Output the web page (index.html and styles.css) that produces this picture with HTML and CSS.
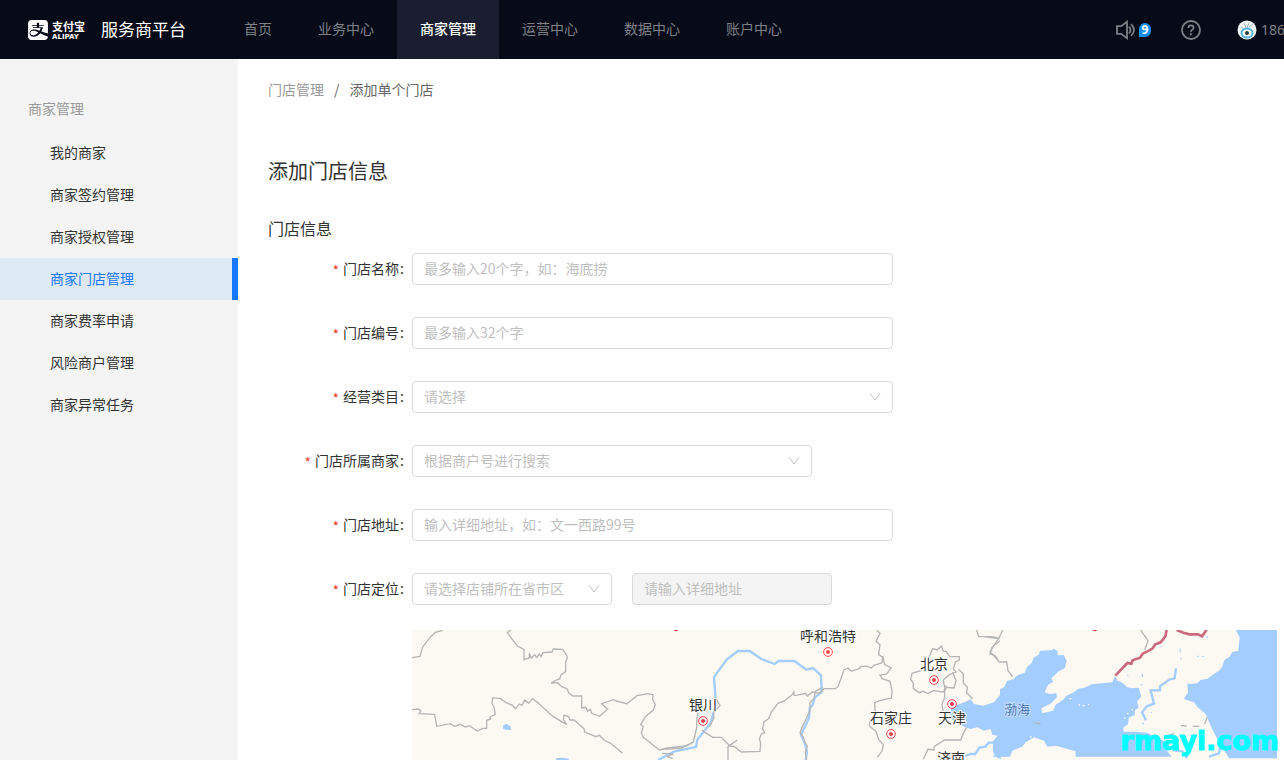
FILE: index.html
```html
<!DOCTYPE html>
<html lang="zh-CN">
  <head>
    <meta charset="UTF-8" />
    <meta name="viewport" content="width=device-width, initial-scale=1.0" />
    <title>添加单个门店</title>
    <link rel="stylesheet" href="styles.css">
  </head>
  <body>
    <header class="header">
      <a href="#" class="logo">
        <svg class="logo-icon" viewBox="0 0 24 24">
          <path fill="#fff" d="M19.695 15.07c3.426 1.158 4.203 1.22 4.203 1.22V3.846c0-2.124-1.705-3.845-3.81-3.845H3.914C1.808.001.102 1.722.102 3.846v16.31c0 2.123 1.706 3.845 3.813 3.845h16.173c2.105 0 3.81-1.722 3.81-3.845v-.157s-6.19-2.602-9.315-4.119c-2.096 2.602-4.8 4.181-7.607 4.181-4.75 0-6.361-4.19-4.112-6.949.49-.602 1.324-1.175 2.617-1.497 2.025-.502 5.247.313 8.266 1.317a16.796 16.796 0 0 0 1.341-3.302H5.781v-.952h4.799V6.975H4.77v-.953h5.81V3.591s0-.409.411-.409h2.347v2.84h5.744v.951h-5.744v1.704h4.69a19.453 19.453 0 0 1-1.986 5.06c1.424.52 2.702 1.011 3.654 1.333m-13.81-2.032c-.596.06-1.71.325-2.321.869-1.83 1.608-.735 4.55 2.968 4.55 2.151 0 4.301-1.388 5.99-3.61-2.403-1.182-4.438-2.028-6.637-1.809" />
        </svg>
        <span class="logo-text">
          <span class="logo-cn">支付宝</span>
          <span class="logo-en">ALIPAY</span>
        </span>
        <span class="logo-title">服务商平台</span>
      </a>
      <nav class="nav">
        <a href="#">首页</a>
        <a href="#">业务中心</a>
        <a href="#" class="active">商家管理</a>
        <a href="#">运营中心</a>
        <a href="#">数据中心</a>
        <a href="#">账户中心</a>
      </nav>
      <div class="tools">
        <button class="notice" aria-label="消息">
          <svg width="20" height="20" viewBox="0 0 20 20" fill="none" stroke="#7d8087" stroke-width="1.8">
            <path d="M1 6.2h4.2L11 1.800v16.400l-5.800-4.400H1z" />
            <path d="M13 6.600q3 3.400 0 6.800M15 4.200q6 5.800 0 11.600" />
          </svg>
          <span class="badge">9</span>
        </button>
        <button class="help" aria-label="帮助">
          <svg width="20" height="20" viewBox="0 0 20 20" fill="none" stroke="#7d8087" stroke-width="1.800">
            <circle cx="10" cy="10" r="9" />
            <path d="M7.400 8q0-2.600 2.600-2.600T12.600 7.800q0 1.200-1.400 2T10 12M10 13.300v1.900" />
          </svg>
        </button>
        <a href="#" class="user">
          <svg width="20" height="20" viewBox="0 0 20 20">
            <circle cx="10" cy="10" r="9.500" fill="#f3f6f8" />
            <path d="M7 3l2 5M12 3l-2 5M12 7l4-3M4 7l3 2" stroke="#a9b2b8" fill="none" />
            <ellipse cx="10" cy="13" rx="5.500" ry="4.500" fill="#fff" stroke="#4fb4e0" stroke-width="2" />
            <circle cx="10" cy="13" r="2" fill="#333" />
          </svg>
          <span>186******32</span>
        </a>
      </div>
    </header>

    <div class="page">
      <aside class="sidebar">
        <div class="sidebar-title">商家管理</div>
        <a href="#">我的商家</a>
        <a href="#">商家签约管理</a>
        <a href="#">商家授权管理</a>
        <a href="#" class="active">商家门店管理</a>
        <a href="#">商家费率申请</a>
        <a href="#">风险商户管理</a>
        <a href="#">商家异常任务</a>
      </aside>

      <main class="content">
        <div class="breadcrumb">
          <a href="#">门店管理</a>
          <span>/</span>
          <span class="current">添加单个门店</span>
        </div>
        <h1>添加门店信息</h1>
        <h2>门店信息</h2>

        <form class="form">
          <div class="row">
            <label for="shopName">门店名称</label>
            <input class="field" type="text" id="shopName" placeholder="最多输入20个字，如：海底捞" />
          </div>
          <div class="row">
            <label for="shopNo">门店编号</label>
            <input class="field" type="text" id="shopNo" placeholder="最多输入32个字" />
          </div>
          <div class="row">
            <label for="category">经营类目</label>
            <div class="select">
              <select class="field" id="category">
                <option>请选择</option>
              </select>
              <svg width="12" height="12" viewBox="0 0 12 12"><path d="M1 2.500l5 6.500 5-6.500" /></svg>
            </div>
          </div>
          <div class="row">
            <label for="merchant">门店所属商家</label>
            <div class="select medium">
              <select class="field" id="merchant">
                <option>根据商户号进行搜索</option>
              </select>
              <svg width="12" height="12" viewBox="0 0 12 12"><path d="M1 2.500l5 6.500 5-6.500" /></svg>
            </div>
          </div>
          <div class="row">
            <label for="address">门店地址</label>
            <input class="field" type="text" id="address" placeholder="输入详细地址，如：文一西路99号" />
          </div>
          <div class="row">
            <label for="region">门店定位</label>
            <div class="select small">
              <select class="field" id="region">
                <option>请选择店铺所在省市区</option>
              </select>
              <svg width="12" height="12" viewBox="0 0 12 12"><path d="M1 2.500l5 6.500 5-6.500" /></svg>
            </div>
            <input class="field detail" type="text" aria-label="详细地址" placeholder="请输入详细地址" disabled />
          </div>
        </form>

        <div class="map">
          <svg viewBox="0 18 2595 390" preserveAspectRatio="xMinYMin slice">
            <!-- sea -->
            <g class="sea" transform="translate(1716 0)">
              <path d="M-52 232l12-7 10 15 28 5 32-10 18-22 0-18 12-5 10-20 18-4 12-12 22-8 8-18 14-12 4-14 16-10 4-12 34-1 7-5 12 8 0 12 18-1 9 18-6 22-20 10-20 20 5 10-15 10-10 22 15 5 20-2 2 12-17 18-30 15 3 15 32-8 8-18 22-14 12-14 18-8 16-12 18-3 22-10 62-6 8-20 7 15 12 4 18 16 14 3 20-2 8 27-13 14 5 20-11 6-1 15-18 8-2 20-15 10 2 12 30 0 40 3 25 12 20 10 20 15-9 12 18 23H275l0-16-35-10-25-7-25 3-10-18-30-10-25 15-10 13-30 12-7 18H25l15-13-10-20-5-10 15-20-15-3 -5-17-20 5-20-10-20 5-20-7-30-13-10-15 2-30z" />
              <path d="M755 0v18l12 22-4 40-18 4-8 14-16 10-6 20-10 12-15 10-20 14-20 4-10 10-20 2-10-2 2 27-12 20 30 10 10 14 25 21 15 35 20 40 15 25 20 33h144V0z" />
              <path d="M28 358q14-10 22 0l0 48q-30-10-22-48" />
            </g>
            <path class="lake" d="M273 305l10-6 12 8 3 10-12 1-12-3zM432 403l20-2 18 3v8h-38z" />
            <g class="lake" transform="translate(1716 0)">
              <path d="M430 152h3v4h-3zM473 150h4v8h-4zM470 180h5v4h-5zM587 73h3v12h-3zM588 102h4v4h-4zM640 95h4v4h-4zM655 96h5v3h-5zM668 37h4v4h-4zM530 66h3v3h-3zM500 263h4v3h-4zM475 297h5v4h-5z" />
            </g>

            <!-- islands -->
            <g class="island" transform="translate(1716 0)">
              <path d="M256 222h6v4h-6zM284 241h4v4h-4zM296 243h6v4h-6zM312 240h3v3h-3zM428 267h6v4h-6zM420 280h4v4h-4zM442 255h5v4h-5zM138 337h5v4h-5zM835 374h7v7h-7z" />
            </g>

            <!-- rivers -->
            <g class="river">
              <path d="M738 408l50-26 64-13 4-22 40-50 16-58-6-80 38-52 34-26h35l35 24 40 15 12-9h47l36 26 20-5 24 22 2 50-20 16-8 24-8 8-2 30-24 50 10 22 8 28-4 28" />
              <path d="M1660 396l16-6h14l12-19 18-3 10-12h30" />
            </g>
            <g class="river" transform="translate(1716 0)">
              <path d="M576 133l-4 30-16 4-28 20v12h-28l10 40-22 8-14 18 12 24" />
              <path d="M565 378l30 4 15 20M675 398l30-10 4-22" />
            </g>

            <!-- province borders -->
            <g class="border">
              <path d="M0 101l24-4 8-28 20-26 18-18 22-6" />
              <path d="M296 18l-10 8 30 40 20 10v31l16-5 0-14 6 14 10-10 6 8 8-10 6 8 4-12 28-2 4-9 28 1 12 18 2 8-5 10v31l-14 10-4 12-12 4-14 8 20-1 12 12 16 6 6 14 12 8h26v36l12-2 6 12 8-6 4 12 24 9 24-22-18-16 36-12 8 4 32 8 30-24 34-6 14 3-1 14 8 16-6 16-24 20-14 24 8 6-6 18 6 14 48 38 24-6 56-6 22-12 10-42v-20l4-26" />
              <path d="M0 257l20-2 6 6-4 8 46 2 6 36 40-8 14 8 16-6 16 8 12-4 24 16 16-8h12v-24l12-4-2-6 16-8-4-22-6-10 2-18 24 3 16 12 20 8 8 10 12-14 8 4 8-16 12 10 12-14 16 12 30 28 16 14 40 24-10-16 2-12 14 4 4 10 12 0 14 12 16 14 2 10 34 14 10-4 14 14 20 10 36 30" />
              <path d="M758 376l50-4 36-18M750 388l34 2-18 8 16 6" />
            </g>
            <g class="border" transform="translate(864 0)">
              <path d="M530 18l10 10-12 24 12 10-4 30 12 8-2 16-24 8-8 8-16-6-16 2-4 6-24 8-10-10-12 6-18 50-8 6h-34l-14 14-20-4-16 12-6-8-26 6-8 0 0-10-8 10-20 16-20 8-20 26-8 20-14 10-4 20 6 12-10 4-6 16 4 12-2 24-56 2-20-16-14-2-26-26-26 0-22-14-10-8" />
              <path d="M28 308l14-26-2-16 20-22-12-20M112 348l-28 20v40" />
              <path d="M368 190l-22 12-4 22-12 12 0 24-24 50-6 16 10 14 4 14 8 12-6 20 4 24" />
              <path d="M548 96l6 26 20 10-14 18-20 4 6 10 24 8 6 28-2 22-34 8-16 6 2 36-16 16-2 18 20 16 8 24 14 16-4 20-14 18" />
              <path d="M688 98l10-24 14 4 12-12 6 16 8 0 12 16h28v10l-12 6-6 20 8 10-20 8-18 16 2 14 8 8-10 14-30-4-16 8-16-6-10 4-18-12v-16l-8-12 4-18 26-8 8-12 12-6z" />
              <path d="M734 186l0 34-8 20 4 30M758 144l10 26-6 22-24-2M776 136l14 14 0 28 12 12-2 16 18 18M800 310l-10 18-8 20h-48l-32 20 0 10-18-2-14 30" />
              <path d="M830 18l6 20h40l18 4M900 50l-24 20-6 20 14 4 10 12" />
            </g>
            <g class="border" transform="translate(1716 0)">
              <path d="M0 38l44 6 12-26M44 44l-18 26-8 14 20 20 8 10h22l4 26 14 18M470 18l22 32-10 28" />
              <path d="M590 305l18 1M626 307h20M662 300l8-20M548 340l22-12M154 297l16 2" />
            </g>

            <!-- national border -->
            <g class="nation" transform="translate(1716 0)">
              <path d="M394 155l36-38 12 2 4-10 22-8 8-12 20-10 10-6 8-12 16-6 14-18 4-19" />
              <path d="M578 18l20 8 18 5 26 0 12 6 14-20" />
            </g>

            <!-- cities -->
            <g class="pin">
              <circle cx="873" cy="291" r="13" /><circle cx="1248" cy="84" r="13" />
              <circle cx="1566" cy="168" r="13" /><circle cx="1620" cy="240" r="13" />
              <circle cx="1437" cy="330" r="13" />
            </g>
            <g class="dot">
              <circle cx="873" cy="291" r="6" /><circle cx="1248" cy="84" r="6" />
              <circle cx="1566" cy="168" r="6" /><circle cx="1620" cy="240" r="6" />
              <circle cx="1437" cy="330" r="6" />
              <circle cx="792" cy="16" r="6" /><circle cx="2049" cy="15" r="7" />
            </g>
            <g class="city">
              <text x="873" y="258">银川</text>
              <text x="1248" y="51">呼和浩特</text>
              <text x="1566" y="135">北京</text>
              <text x="1437" y="298">石家庄</text>
              <text x="1620" y="298">天津</text>
              <text x="1617" y="418">济南</text>
              <text x="1815" y="271" class="water">渤海</text>
            </g>
          </svg>
        </div>
      </main>
    </div>
    <div class="watermark">rmayi.com</div>
  </body>
</html>
```
FILE: styles.css
```css
* {
  box-sizing: border-box;
}
body {
  margin: 0;
  min-height: 100vh;
  display: flex;
  flex-direction: column;
  position: relative;
  font-family: "Noto Sans CJK SC", sans-serif;
  font-size: 14px;
  line-height: 20px;
  color: #333;
  background: #fff;
}
a {
  color: inherit;
  text-decoration: none;
}
button {
  padding: 0;
  border: 0;
  background: none;
  cursor: pointer;
}

/* header */
.header {
  display: flex;
  height: 59px;
  padding-left: 28px;
  background: #070b17;
  color: #7d8087;
  overflow: hidden;
}
.logo {
  display: flex;
  align-items: center;
  flex: none;
  width: 193px;
  color: #fff;
  white-space: nowrap;
}
.logo-icon {
  width: 20px;
  height: 20px;
}
.logo-text {
  display: flex;
  flex-direction: column;
  width: 35px;
  margin: 0 14px 0 4px;
}
.logo-cn {
  font-size: 11px;
  line-height: 14px;
  font-weight: 700;
}
.logo-en {
  font: 700 7px/8px "DejaVu Sans", sans-serif;
}
.logo-title {
  padding-bottom: 2px;
  font-size: 17px;
}
.nav {
  display: flex;
}
.nav a {
  padding: 0 23px;
  line-height: 56px;
  white-space: nowrap;
}
.nav a.active {
  background: #1b1e30;
  color: #fff;
  font-weight: 500;
}
.tools {
  display: flex;
  align-items: center;
  flex: none;
  gap: 30px;
  width: 168px;
  margin-left: auto;
  white-space: nowrap;
}
.tools svg {
  display: block;
  flex: none;
}
.notice {
  display: flex;
  align-items: center;
  gap: 3px;
}
.badge {
  width: 12px;
  height: 14px;
  border-radius: 6px 6px 6px 0;
  background: #108ee9;
  color: #fff;
  font: 700 12px/14px "Noto Sans", sans-serif;
}
.user {
  display: flex;
  align-items: center;
  gap: 4px;
  margin-left: 6px;
  font-family: "Noto Sans", sans-serif;
}

/* sidebar */
.page {
  display: flex;
  flex: 1;
}
.sidebar {
  flex: none;
  width: 238px;
  padding-top: 39px;
  background: #f4f4f4;
}
.sidebar-title {
  padding-left: 28px;
  margin-bottom: 14px;
  color: #999;
}
.sidebar a {
  display: block;
  padding: 0 0 2px 50px;
  line-height: 40px;
}
.sidebar a.active {
  border-right: 6px solid #1677ff;
  background: #dde9f3;
  color: #1677ff;
}

/* content */
.content {
  flex: 1;
  min-width: 0;
  display: flex;
  flex-direction: column;
  padding: 20px 7px 0 30px;
}
.breadcrumb {
  display: flex;
  gap: 10px;
  color: #666;
}
.breadcrumb a {
  color: #999;
}
h1 {
  margin: 57px 0 30px;
  font-size: 20px;
  line-height: 30px;
  font-weight: 400;
}
h2 {
  margin: 0 0 13px;
  font-size: 16px;
  line-height: 24px;
  font-weight: 400;
}
.form {
  display: flex;
  flex-direction: column;
  gap: 32px;
  max-width: 625px;
}
.row {
  display: flex;
  align-items: center;
}
.row label {
  flex: none;
  width: 144px;
  padding: 0 8px 2px 0;
  text-align: right;
}
.row label::before {
  content: "*";
  margin-right: 4px;
  color: #f04134;
  line-height: 14px;
  vertical-align: -2px;
}
.row label::after {
  content: ":";
  margin-left: 1px;
}
.field {
  flex: 1;
  width: 100%;
  min-width: 0;
  height: 32px;
  padding: 0 11px 2px;
  border: 1px solid #d9d9d9;
  border-radius: 4px;
  background: #fff;
  font: inherit;
  color: #bfbfbf;
}
.field::placeholder {
  color: #bfbfbf;
}
.field:disabled {
  background: #f4f4f4;
}
.detail {
  flex: none;
  width: 200px;
  margin-left: 20px;
}
.select {
  position: relative;
  flex: 1;
}
.select select {
  display: block;
  appearance: none;
}
.select svg {
  position: absolute;
  top: 10px;
  right: 12px;
  fill: none;
  stroke: #bfbfbf;
  pointer-events: none;
}
.medium {
  flex: none;
  width: 400px;
}
.small {
  flex: none;
  width: 200px;
}

/* map */
.map {
  flex: 1;
  min-height: 130px;
  margin: 25px 0 0 144px;
  background: #fcf9f2;
  overflow: hidden;
}
.map svg {
  display: block;
  width: 100%;
}
.sea,
.lake {
  fill: #a3ccff;
}
.island {
  fill: #fcf9f2;
}
.river {
  fill: none;
  stroke: #a3ccff;
  stroke-width: 7;
}
.border {
  fill: none;
  stroke: #b5b5b5;
  stroke-width: 4;
}
.nation {
  fill: none;
  stroke: #cb6a7d;
  stroke-width: 8;
}
.pin {
  fill: #fff;
  stroke: #ee4048;
  stroke-width: 3;
}
.dot {
  fill: #ee4048;
}
.city {
  font-size: 42px;
  text-anchor: middle;
  fill: #333;
  stroke: #fff;
  stroke-width: 6;
  paint-order: stroke;
}
.city .water {
  fill: #4a7ab8;
  stroke: #c4ddfd;
  font-size: 39px;
}
.watermark {
  position: absolute;
  right: 5px;
  bottom: 4px;
  color: #00ffff;
  font: 700 27px/30px "DejaVu Sans", sans-serif;
  -webkit-text-stroke: 1px #00ffff;
}
```
